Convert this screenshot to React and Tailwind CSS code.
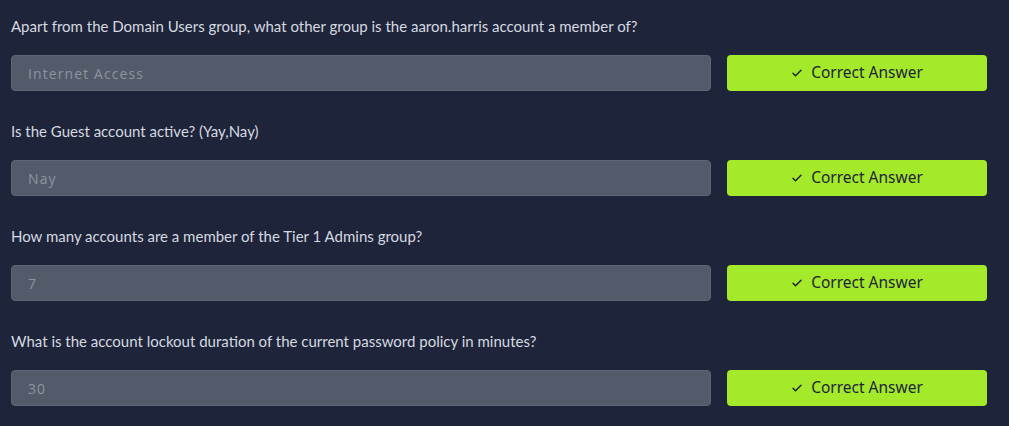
import React from "react";

const items = [
  { q: "Apart from the Domain Users group, what other group is the aaron.harris account a member of?", a: "Internet Access" },
  { q: "Is the Guest account active? (Yay,Nay)", a: "Nay" },
  { q: "How many accounts are a member of the Tier 1 Admins group?", a: "7" },
  { q: "What is the account lockout duration of the current password policy in minutes?", a: "30" },
];

function Check() {
  return (
    <svg width="12" height="12" viewBox="0 0 24 24" fill="none" stroke="#1e2439" strokeWidth="3" strokeLinecap="round" strokeLinejoin="round">
      <path d="M4 12.5l5 5L20 6.5" />
    </svg>
  );
}

export default function App() {
  return (
    <div className="w-[1009px] h-[426px] bg-[#1e2439] pl-[11px] pr-[22px] pt-[16px] flex flex-col gap-[30px]" style={{ fontFamily: "'Open Sans', sans-serif" }}>
      {items.map((it, i) => (
        <div key={i} className="flex flex-col gap-[19px]">
          <div className="text-[15px] leading-[20px] text-[#d5d9e0]" style={{ fontFamily: "Lato, sans-serif" }}>{it.q}</div>
          <div className="flex gap-[16px] items-center">
            <div className="w-[700px] h-[36px] rounded-[4px] bg-[#535b6a] border border-[#5e6675] flex items-center pl-[16px] text-[14px] tracking-[1.1px] text-[#8c94a2]">
              {it.a}
            </div>
            <div className="w-[260px] h-[36px] rounded-[4px] bg-[#a4ea2a] flex items-center justify-center gap-[8px] text-[15.5px] text-[#1e2439]" style={{ fontFamily: "'Noto Sans', sans-serif" }}>
              <Check />
              <span>Correct Answer</span>
            </div>
          </div>
        </div>
      ))}
    </div>
  );
}
